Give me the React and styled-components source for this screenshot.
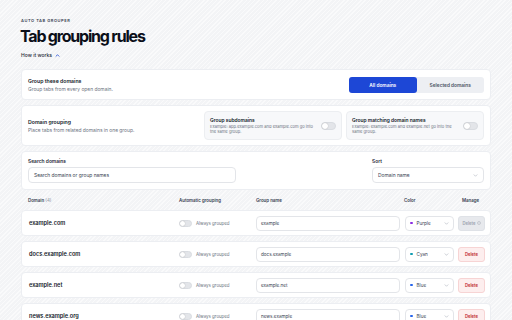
import React from "react";
import styled, { createGlobalStyle } from "styled-components";

const Global = createGlobalStyle`
  html, body { margin: 0; padding: 0; }
  body {
    width: 512px;
    height: 320px;
    overflow: hidden;
    font-family: Inter, "Noto Sans", sans-serif;
    color: #111827;
    background-color: #f3f4f6;
    background-image: repeating-linear-gradient(135deg, rgba(255,255,255,0.55) 0 1px, transparent 1px 3px);
  }
  * { box-sizing: border-box; }
`;

const Page = styled.div`
  padding: 18px 21px 0 21px;
  display: flex;
  flex-direction: column;
`;

const Eyebrow = styled.div`
  font-size: 4px;
  line-height: 6px;
  font-weight: 600;
  letter-spacing: 0.14em;
  text-transform: uppercase;
  color: #374151;
`;

const Title = styled.h1`
  margin: 2px 0 0 -1px;
  font-size: 16px;
  line-height: 20px;
  font-weight: 700;
  letter-spacing: -1.2px;
  color: #0b0f19;
`;

const HowLink = styled.div`
  margin-top: 5px;
  display: flex;
  align-items: center;
  gap: 3px;
  font-size: 5px;
  line-height: 8px;
  font-weight: 500;
  color: #1f2937;
`;

const Stack = styled.div`
  margin-top: 10px;
  display: flex;
  flex-direction: column;
  gap: 5px;
`;

const Card = styled.div`
  background: #ffffff;
  border: 1px solid #eceef2;
  border-radius: 4px;
  height: ${(p) => p.$h}px;
  padding: 0 6px 0 6px;
  display: flex;
  align-items: ${(p) => p.$align || "center"};
  justify-content: space-between;
`;

const TextBlock = styled.div`
  display: flex;
  flex-direction: column;
  gap: 2px;
`;

const Heading = styled.div`
  font-size: 5.2px;
  line-height: 6px;
  font-weight: 600;
  color: #111827;
`;

const Desc = styled.div`
  font-size: 4.9px;
  line-height: 6px;
  color: #6b7280;
`;

const Segmented = styled.div`
  display: flex;
  width: 135px;
  height: 16px;
  background: #edeff3;
  border-radius: 3px;
`;

const Segment = styled.div`
  flex: 1;
  display: flex;
  align-items: center;
  justify-content: center;
  border-radius: 3px;
  font-size: 4.8px;
  font-weight: 600;
  background: ${(p) => (p.$active ? "#1d47d6" : "transparent")};
  color: ${(p) => (p.$active ? "#ffffff" : "#4b5563")};
`;

const SubCards = styled.div`
  display: flex;
  gap: 4px;
`;

const SubCard = styled.div`
  width: 138px;
  height: 29px;
  background: #f7f8fa;
  border: 1px solid #eceef1;
  border-radius: 4px;
  padding: 0 5px 0 5px;
  display: flex;
  align-items: center;
  justify-content: space-between;
  gap: 6px;
`;

const SubText = styled.div`
  display: flex;
  flex-direction: column;
  gap: 1px;
  width: 108px;
`;

const SubTitle = styled.div`
  font-size: 4.9px;
  line-height: 6px;
  font-weight: 600;
  color: #111827;
`;

const SubDesc = styled.div`
  font-size: 4.1px;
  line-height: 5.5px;
  color: #6b7280;
`;

const Toggle = styled.div`
  flex: none;
  position: relative;
  width: ${(p) => (p.$small ? 13 : 15)}px;
  height: ${(p) => (p.$small ? 7 : 8)}px;
  border-radius: 8px;
  background: #e3e5e9;
  border: 1px solid #d9dce1;
  &::after {
    content: "";
    position: absolute;
    left: 0px;
    top: 0px;
    width: ${(p) => (p.$small ? 5 : 6)}px;
    height: ${(p) => (p.$small ? 5 : 6)}px;
    border-radius: 50%;
    background: #ffffff;
    box-shadow: 0 0 1px rgba(0, 0, 0, 0.35);
  }
`;

const Field = styled.div`
  display: flex;
  flex-direction: column;
  gap: 3px;
  width: ${(p) => p.$w}px;
`;

const Label = styled.div`
  font-size: 4.9px;
  line-height: 6px;
  font-weight: 600;
  color: #1f2937;
`;

const Input = styled.div`
  height: 16px;
  border: 1px solid #e3e5e9;
  border-radius: 4px;
  background: #ffffff;
  padding: 0 5px;
  display: flex;
  align-items: center;
  justify-content: space-between;
  font-size: 4.9px;
  color: #374151;
`;

const Chevron = ({ color = "#9ca3af", up, size = 5 }) => (
  <svg width={size} height={size} viewBox="0 0 10 10" fill="none">
    <path
      d={up ? "M2 6.5 L5 3.5 L8 6.5" : "M2 3.5 L5 6.5 L8 3.5"}
      stroke={color}
      strokeWidth={up ? 1.6 : 1}
      strokeLinecap="round"
      strokeLinejoin="round"
    />
  </svg>
);

const SearchCard = styled(Card)`
  padding-top: 6px;
`;

const Grid = styled.div`
  display: grid;
  grid-template-columns: 150px 77px 149px 53px 27px;
  align-items: center;
`;

const HeaderRow = styled(Grid)`
  height: 20px;
  padding: 0 7px;
  font-size: 4.4px;
  font-weight: 600;
  color: #374151;
`;

const HeaderCell = styled.div`
  padding-left: ${(p) => p.$pl || 0}px;
  text-align: ${(p) => p.$center ? "center" : "left"};
  white-space: nowrap;
`;

const Muted = styled.span`
  color: #9ca3af;
  font-weight: 500;
`;

const Rows = styled.div`
  display: flex;
  flex-direction: column;
  gap: 5px;
`;

const Row = styled(Grid)`
  height: 26px;
  padding: 0 7px;
  background: #ffffff;
  border: 1px solid #eceef2;
  border-radius: 4px;
`;

const Domain = styled.div`
  font-size: 5.6px;
  font-weight: 600;
  color: #111827;
`;

const AutoCell = styled.div`
  display: flex;
  align-items: center;
  gap: 4px;
  font-size: 4.4px;
  color: #6b7280;
`;

const SmallInput = styled.div`
  width: ${(p) => p.$w}px;
  height: 15px;
  border: 1px solid #e3e5e9;
  border-radius: 4px;
  padding: 0 4px;
  display: flex;
  align-items: center;
  gap: 4px;
  font-size: 4.6px;
  color: #374151;
`;

const Dot = styled.span`
  width: 2.6px;
  height: 2.6px;
  border-radius: 50%;
  background: ${(p) => p.$c};
  flex: none;
`;

const Grow = styled.span`
  flex: 1;
`;

const DeleteBtn = styled.div`
  width: 27px;
  height: 15px;
  border-radius: 3px;
  display: flex;
  align-items: center;
  justify-content: center;
  gap: 1px;
  font-size: 4.2px;
  font-weight: 600;
  background: ${(p) => (p.$disabled ? "#e7e9ed" : "#fdeeee")};
  border: 1px solid ${(p) => (p.$disabled ? "#dfe2e7" : "#f7d4d4")};
  color: ${(p) => (p.$disabled ? "#9ca3af" : "#c0262d")};
`;

const rows = [
  { domain: "example.com", group: "example", color: "Purple", c: "#8a2be2", disabled: true },
  { domain: "docs.example.com", group: "docs.example", color: "Cyan", c: "#0e9bb0" },
  { domain: "example.net", group: "example.net", color: "Blue", c: "#2563eb" },
  { domain: "news.example.org", group: "news.example", color: "Blue", c: "#2563eb" },
];

export default function App() {
  return (
    <>
      <Global />
      <Page>
        <Eyebrow>Auto Tab Grouper</Eyebrow>
        <Title>Tab grouping rules</Title>
        <HowLink>
          How it works <Chevron up color="#1d47d6" size={5} />
        </HowLink>
        <Stack>
          <Card $h={31}>
            <TextBlock>
              <Heading>Group these domains</Heading>
              <Desc>Group tabs from every open domain.</Desc>
            </TextBlock>
            <Segmented>
              <Segment $active>All domains</Segment>
              <Segment>Selected domains</Segment>
            </Segmented>
          </Card>
          <Card $h={41}>
            <TextBlock>
              <Heading>Domain grouping</Heading>
              <Desc>Place tabs from related domains in one group.</Desc>
            </TextBlock>
            <SubCards>
              <SubCard>
                <SubText>
                  <SubTitle>Group subdomains</SubTitle>
                  <SubDesc>Example: app.example.com and example.com go into the same group.</SubDesc>
                </SubText>
                <Toggle />
              </SubCard>
              <SubCard>
                <SubText>
                  <SubTitle>Group matching domain names</SubTitle>
                  <SubDesc>Example: example.com and example.net go into the same group.</SubDesc>
                </SubText>
                <Toggle />
              </SubCard>
            </SubCards>
          </Card>
          <SearchCard $h={39} $align="flex-start">
            <Field $w={208}>
              <Label>Search domains</Label>
              <Input>Search domains or group names</Input>
            </Field>
            <Field $w={112}>
              <Label>Sort</Label>
              <Input>
                Domain name
                <Chevron />
              </Input>
            </Field>
          </SearchCard>
        </Stack>
        <HeaderRow>
          <HeaderCell>
            Domain <Muted>(4)</Muted>
          </HeaderCell>
          <HeaderCell $pl={1}>Automatic grouping</HeaderCell>
          <HeaderCell $pl={1}>Group name</HeaderCell>
          <HeaderCell>Color</HeaderCell>
          <HeaderCell $center>Manage</HeaderCell>
        </HeaderRow>
        <Rows>
          {rows.map((r) => (
            <Row key={r.domain}>
              <Domain>{r.domain}</Domain>
              <AutoCell>
                <Toggle $small />
                Always grouped
              </AutoCell>
              <SmallInput $w={144}>{r.group}</SmallInput>
              <SmallInput $w={49}>
                <Dot $c={r.c} />
                <Grow>{r.color}</Grow>
                <Chevron />
              </SmallInput>
              <DeleteBtn $disabled={r.disabled}>
                Delete
                {r.disabled && (
                  <svg width="4" height="4" viewBox="0 0 10 10">
                    <circle cx="5" cy="5" r="3.6" fill="none" stroke="#9ca3af" strokeWidth="1.2" />
                  </svg>
                )}
              </DeleteBtn>
            </Row>
          ))}
        </Rows>
      </Page>
    </>
  );
}
